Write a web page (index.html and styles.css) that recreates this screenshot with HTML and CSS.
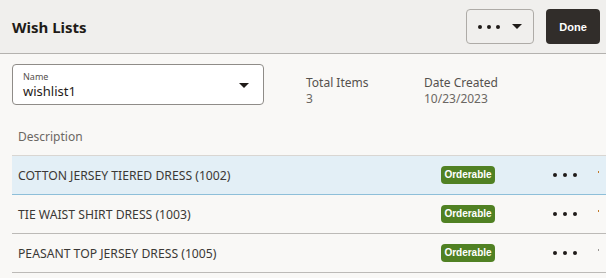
FILE: index.html
```html
<!DOCTYPE html>
<html lang="en">
<head>
  <meta charset="UTF-8" />
  <title>Wish Lists</title>
  <link rel="stylesheet" href="styles.css">
</head>
<body>
  <div class="header">
    <h1>Wish Lists</h1>
    <button class="menu-btn">
      <span class="dots"><i></i><i></i><i></i></span>
      <span class="caret"></span>
    </button>
    <button class="done-btn">Done</button>
  </div>

  <div class="info">
    <div class="select">
      <div class="select-text">
        <label>Name</label>
        <div class="value">wishlist1</div>
      </div>
      <span class="caret"></span>
    </div>
    <div class="stat stat-items">
      <div class="stat-label">Total Items</div>
      <div class="stat-value">3</div>
    </div>
    <div class="stat">
      <div class="stat-label">Date Created</div>
      <div class="stat-value">10/23/2023</div>
    </div>
  </div>

  <div class="table">
    <div class="thead">Description</div>
    <div class="row selected">
      <span class="desc">COTTON JERSEY TIERED DRESS (1002)</span>
      <span class="badge">Orderable</span>
      <span class="dots row-dots"><i></i><i></i><i></i></span>
      <span class="mark orange"></span>
    </div>
    <div class="row">
      <span class="desc">TIE WAIST SHIRT DRESS (1003)</span>
      <span class="badge">Orderable</span>
      <span class="dots row-dots"><i></i><i></i><i></i></span>
      <span class="mark orange"></span>
    </div>
    <div class="row">
      <span class="desc">PEASANT TOP JERSEY DRESS (1005)</span>
      <span class="badge">Orderable</span>
      <span class="dots row-dots"><i></i><i></i><i></i></span>
      <span class="mark"></span>
    </div>
  </div>
</body>
</html>
```

FILE: styles.css
```css
body {
  margin: 0;
  font-family: "Noto Sans", "Open Sans", sans-serif;
  background-color: #f9f8f6;
  color: #2c2a28;
  overflow: hidden;
}

.header {
  display: flex;
  align-items: center;
  height: 53px;
  padding: 0 6px 0 12px;
  background-color: #f0efed;
  border-bottom: 1px solid #b4b2af;
}
.header h1 {
  flex: 1;
  margin: 0;
  font-size: 15px;
  font-weight: bold;
  color: #1f1b18;
}
button {
  height: 35px;
  border-radius: 4px;
  cursor: pointer;
  font-family: "Liberation Sans", Arial, sans-serif;
}
.menu-btn {
  width: 68px;
  margin-right: 12px;
  display: flex;
  align-items: center;
  justify-content: center;
  gap: 12px;
  background: transparent;
  border: 1px solid #aeaba7;
}
.done-btn {
  width: 54px;
  border: none;
  background-color: #312d2a;
  color: #fff;
  font-size: 11px;
  font-weight: bold;
}

.dots {
  display: flex;
  gap: 5px;
}
.dots i {
  width: 4px;
  height: 4px;
  border-radius: 50%;
  background-color: #1f1b18;
}
.caret {
  width: 0;
  height: 0;
  border-left: 5px solid transparent;
  border-right: 5px solid transparent;
  border-top: 5px solid #1f1b18;
}

.info {
  display: flex;
  padding: 10px 0 0 12px;
}
.select {
  width: 252px;
  height: 41px;
  display: flex;
  align-items: center;
  justify-content: space-between;
  padding: 0 14px 0 10px;
  box-sizing: border-box;
  border: 1px solid #8f8c88;
  border-radius: 4px;
  background-color: #fff;
}
.select label {
  display: block;
  font-size: 9px;
  color: #55514d;
  line-height: 12px;
}
.select .value {
  font-size: 13px;
  line-height: 16px;
  color: #1f1b18;
}
.select .caret {
  margin-top: 2px;
}
.stat {
  padding-top: 11px;
  font-size: 12px;
  line-height: 16px;
  color: #55514d;
}
.stat-items {
  margin-left: 42px;
  width: 118px;
}
.stat-value {
  color: #6b6763;
}

.table {
  margin: 12px 0 0 12px;
  width: 594px;
}
.thead {
  height: 36px;
  line-height: 36px;
  padding-left: 6px;
  font-size: 12px;
  color: #6b6763;
  border-bottom: 1px solid #d9d6d2;
}
.row {
  display: grid;
  grid-template-columns: 1fr 54px 82px 29px;
  align-items: center;
  height: 38px;
  padding-left: 6px;
  border-bottom: 1px solid #bcbab7;
  font-size: 12.2px;
  color: #3b3835;
}
.row.selected {
  background-color: #e3eff6;
  border-bottom-color: #8ebfd9;
}
.badge {
  height: 18px;
  line-height: 18px;
  text-align: center;
  border-radius: 4px;
  background-color: #508123;
  color: #fff;
  font-family: "Liberation Sans", Arial, sans-serif;
  font-size: 10px;
  font-weight: bold;
}
.row-dots {
  justify-self: end;
  gap: 6px;
}
.mark {
  justify-self: end;
  width: 1px;
  height: 2px;
  margin-right: 7px;
  margin-top: -6px;
  background-color: #9a9794;
}
.mark.orange {
  background-color: #c07a2a;
}
```
